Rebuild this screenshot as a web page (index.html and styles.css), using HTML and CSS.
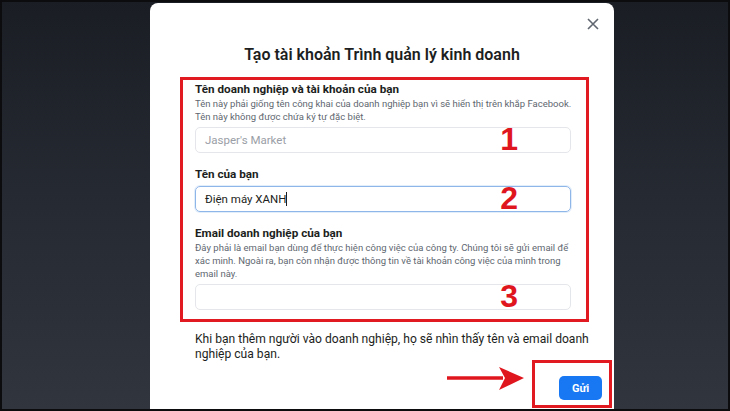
FILE: index.html
```html
<!DOCTYPE html>
<html lang="vi">
<head>
    <meta charset="UTF-8">
    <meta name="viewport" content="width=device-width, initial-scale=1.0">
    <title>Tạo tài khoản Trình quản lý kinh doanh</title>
    <link rel="stylesheet" href="styles.css">
</head>
<body>
    <div class="modal">
        <div class="modal-header">
            <button class="close-button" aria-label="Đóng">
                <svg width="12" height="12" viewBox="0 0 12 12">
                    <path d="M1 1 L11 11 M11 1 L1 11" stroke="#606770" stroke-width="1.6" fill="none"/>
                </svg>
            </button>
        </div>
        <h1 class="modal-title">Tạo tài khoản Trình quản lý kinh doanh</h1>

        <div class="mark-box">
            <div class="field">
                <div class="field-label">Tên doanh nghiệp và tài khoản của bạn</div>
                <div class="field-desc">Tên này phải giống tên công khai của doanh nghiệp bạn vì sẽ hiển thị trên khắp Facebook.<br>Tên này không được chứa ký tự đặc biệt.</div>
                <div class="input-box">
                    <span class="placeholder">Jasper's Market</span>
                    <span class="mark-number">1</span>
                </div>
            </div>
            <div class="field">
                <div class="field-label">Tên của bạn</div>
                <div class="input-box focused">
                    <span class="value">Điện máy XANH</span><span class="caret"></span>
                    <span class="mark-number">2</span>
                </div>
            </div>
            <div class="field">
                <div class="field-label">Email doanh nghiệp của bạn</div>
                <div class="field-desc">Đây phải là email bạn dùng để thực hiện công việc của công ty. Chúng tôi sẽ gửi email để<br>xác minh. Ngoài ra, bạn còn nhận được thông tin về tài khoản công việc của mình trong<br>email này.</div>
                <div class="input-box">
                    <span class="mark-number">3</span>
                </div>
            </div>
        </div>

        <p class="modal-note">Khi bạn thêm người vào doanh nghiệp, họ sẽ nhìn thấy tên và email doanh<br>nghiệp của bạn.</p>

        <div class="modal-footer">
            <svg class="arrow" width="80" height="26" viewBox="0 0 80 26">
                <path d="M2 13 L58 13" stroke="#e0161e" stroke-width="3.5" fill="none"/>
                <path d="M54 2 L79 13 L54 25 L60 13 Z" fill="#e0161e"/>
            </svg>
            <div class="mark-box-button">
                <button class="submit-button">Gửi</button>
            </div>
        </div>
    </div>
</body>
</html>
```

FILE: styles.css
```css
html, body {
    margin: 0;
    padding: 0;
}
body {
    width: 730px;
    height: 411px;
    box-sizing: border-box;
    border: 2px solid #0c0c0e;
    background: linear-gradient(to bottom, #1a1d24 0%, #262a32 50%, #30353e 100%);
    overflow: hidden;
    font-family: Roboto, "Liberation Sans", sans-serif;
    color: #1c1e21;
}
.modal {
    margin-left: 148px;
    margin-top: 1px;
    width: 464px;
    height: 430px;
    background: #fff;
    border-radius: 8px 8px 0 0;
}
.modal-header {
    display: flex;
    justify-content: flex-end;
    padding: 15px 15px 0 0;
}
.close-button {
    width: 12px;
    height: 12px;
    padding: 0;
    border: none;
    background: transparent;
    display: flex;
    cursor: pointer;
}
.modal-title {
    margin: 15px 0 0 0;
    font-size: 16px;
    line-height: 20px;
    font-weight: 600;
    text-align: center;
    color: #1c1e21;
}

/* red annotation frame */
.mark-box {
    margin: 12px 0 0 30px;
    width: 409px;
    box-sizing: border-box;
    border: 3px solid #e11a22;
    padding: 2px 15px 9px 12px;
}
.field + .field {
    margin-top: 14px;
}
.field-label {
    font-size: 11.7px;
    line-height: 15px;
    font-weight: bold;
}
.field-desc {
    font-size: 9.5px;
    line-height: 13px;
    color: #606770;
    white-space: nowrap;
}
.input-box {
    position: relative;
    margin-top: 4px;
    height: 26px;
    box-sizing: border-box;
    border: 1px solid #e4e6eb;
    border-radius: 5px;
    padding: 0 9px;
    display: flex;
    align-items: center;
    font-size: 11.5px;
}
.input-box.focused {
    border-color: #8fb6e8;
    box-shadow: 0 0 0 1px #e3eefb;
}
.placeholder {
    color: #9a9ea6;
}
.caret {
    display: inline-block;
    width: 1px;
    height: 14px;
    background: #1c1e21;
}
.mark-number {
    position: absolute;
    right: 52px;
    top: 50%;
    transform: translateY(-52%);
    font-family: "Liberation Sans", Arial, sans-serif;
    font-weight: bold;
    font-size: 32px;
    line-height: 32px;
    color: #e0161e;
}

.modal-note {
    margin: 10px 0 0 0;
    padding: 0 0 0 45px;
    font-size: 12.1px;
    line-height: 15px;
    white-space: nowrap;
}
.modal-footer {
    display: flex;
    justify-content: flex-end;
    align-items: flex-start;
    margin-top: -2px;
    padding-right: 2px;
}
.arrow {
    margin: 5px 7px 0 0;
}
.mark-box-button {
    border: 3px solid #e11a22;
    padding: 13px 7px 5px 24px;
}
.submit-button {
    display: block;
    width: 43px;
    height: 24px;
    border: none;
    border-radius: 5px;
    background: #1877f2;
    color: #fff;
    font-family: Roboto, "Liberation Sans", sans-serif;
    font-weight: bold;
    font-size: 11px;
    padding: 0;
}
```
